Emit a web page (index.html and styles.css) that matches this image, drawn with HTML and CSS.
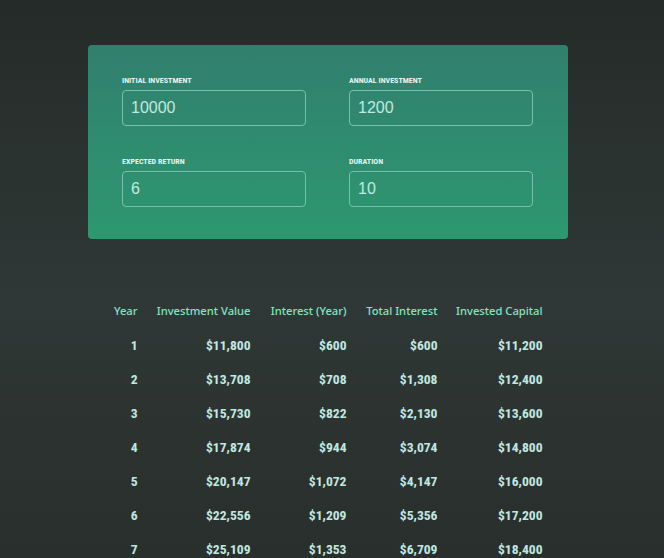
FILE: index.html
```html
<!DOCTYPE html>
<html lang="en">
<head>
<meta charset="utf-8">
<title>Investment Calculator</title>
<link rel="stylesheet" href="styles.css">
</head>
<body>
<main class="page">
  <section class="user-input">
    <div class="field">
      <label class="field-label">Initial Investment</label>
      <input class="field-input" type="number" value="10000">
    </div>
    <div class="field">
      <label class="field-label">Annual Investment</label>
      <input class="field-input" type="number" value="1200">
    </div>
    <div class="field">
      <label class="field-label">Expected Return</label>
      <input class="field-input" type="number" value="6">
    </div>
    <div class="field">
      <label class="field-label">Duration</label>
      <input class="field-input" type="number" value="10">
    </div>
  </section>

  <table class="result">
    <colgroup>
      <col class="col-year">
      <col class="col-value">
      <col class="col-interest">
      <col class="col-total">
      <col class="col-capital">
    </colgroup>
    <thead>
      <tr>
        <th>Year</th>
        <th>Investment Value</th>
        <th>Interest (Year)</th>
        <th>Total Interest</th>
        <th>Invested Capital</th>
      </tr>
    </thead>
    <tbody>
      <tr><td>1</td><td>$11,800</td><td>$600</td><td>$600</td><td>$11,200</td></tr>
      <tr><td>2</td><td>$13,708</td><td>$708</td><td>$1,308</td><td>$12,400</td></tr>
      <tr><td>3</td><td>$15,730</td><td>$822</td><td>$2,130</td><td>$13,600</td></tr>
      <tr><td>4</td><td>$17,874</td><td>$944</td><td>$3,074</td><td>$14,800</td></tr>
      <tr><td>5</td><td>$20,147</td><td>$1,072</td><td>$4,147</td><td>$16,000</td></tr>
      <tr><td>6</td><td>$22,556</td><td>$1,209</td><td>$5,356</td><td>$17,200</td></tr>
      <tr><td>7</td><td>$25,109</td><td>$1,353</td><td>$6,709</td><td>$18,400</td></tr>
      <tr><td>8</td><td>$27,816</td><td>$1,507</td><td>$8,216</td><td>$19,600</td></tr>
      <tr><td>9</td><td>$30,685</td><td>$1,669</td><td>$9,885</td><td>$20,800</td></tr>
      <tr><td>10</td><td>$33,726</td><td>$1,841</td><td>$11,726</td><td>$22,000</td></tr>
    </tbody>
  </table>
</main>
</body>
</html>
```

FILE: styles.css
```css
html, body {
  margin: 0;
  padding: 0;
}

body {
  min-height: 100vh;
  background: linear-gradient(180deg, #242b29 0%, #2b3331 30%, #2f3836 55%, #2b3230 80%, #292f2d 100%);
  background-attachment: fixed;
  color: #e1eeee;
  font-family: "Noto Sans", sans-serif;
}

.page {
  width: 656px;
  padding-top: 45px;
  padding-bottom: 40px;
}

.user-input {
  box-sizing: border-box;
  width: 480px;
  margin: 0 auto;
  padding: 30px 36px 32px 34px;
  border-radius: 4px;
  background: linear-gradient(180deg, #317f6e, #2d9870);
  display: grid;
  grid-template-columns: 184px 184px;
  column-gap: 43px;
  row-gap: 30px;
}

.field {
  display: flex;
  flex-direction: column;
}

.field-label {
  display: block;
  margin-bottom: 4px;
  padding-top: 1px;
  font-family: Roboto, sans-serif;
  font-stretch: condensed;
  font-size: 8px;
  line-height: 10px;
  font-weight: bold;
  text-transform: uppercase;
  color: #e6f3ef;
}

.field-input {
  box-sizing: border-box;
  width: 184px;
  height: 36px;
  margin: 0;
  padding: 0 8px;
  border: 1px solid #76c0ae;
  border-radius: 4px;
  background: transparent;
  color: #c2e9e0;
  font-family: "Liberation Sans", Arial, sans-serif;
  font-size: 16px;
  outline: none;
  -moz-appearance: textfield;
  appearance: textfield;
}

.field-input::-webkit-outer-spin-button,
.field-input::-webkit-inner-spin-button {
  -webkit-appearance: none;
  margin: 0;
}

.result {
  margin: 47px auto 0;
  table-layout: fixed;
  width: 461px;
  border-spacing: 16px;
  border-collapse: separate;
  text-align: right;
}

.col-year { width: 24px; }
.col-value { width: 97px; }
.col-interest { width: 80px; }
.col-total { width: 75px; }
.col-capital { width: 89px; }

.result th,
.result td {
  padding: 0;
  line-height: 18px;
  white-space: nowrap;
}

.result th {
  font-family: "Noto Sans", sans-serif;
  font-size: 11.2px;
  font-weight: 500;
  color: #83e6c0;
}

.result td {
  font-family: Roboto, sans-serif;
  font-stretch: condensed;
  font-size: 13.6px;
  font-weight: bold;
  color: #c2e9e0;
}
```
